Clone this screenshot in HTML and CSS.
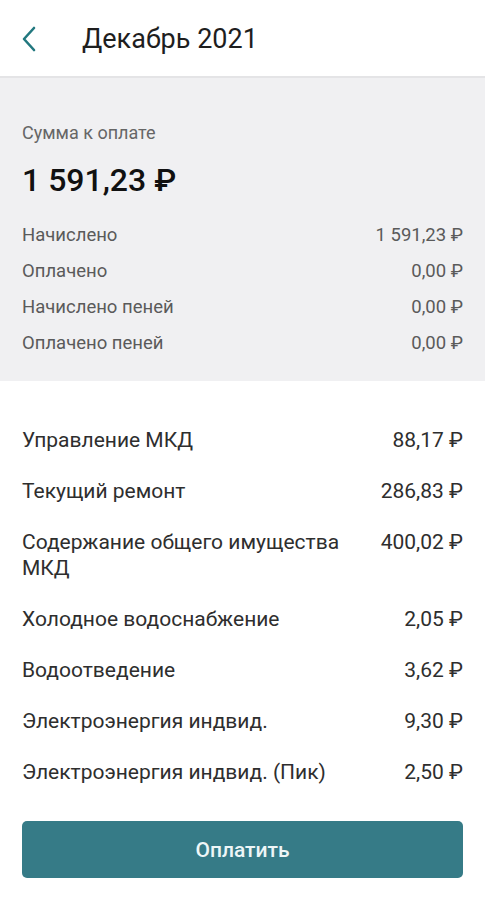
FILE: index.html
```html
<!DOCTYPE html>
<html lang="ru">

<head>
    <meta charset="UTF-8">
    <meta name="viewport" content="width=device-width, initial-scale=1.0">
    <title>Декабрь 2021</title>

    <link rel="stylesheet" href="styles.css">
</head>

<body>
    <div class="header">
        <div class="back">
            <svg width="18" height="26" viewBox="0 0 18 26">
                <path d="M14 2 L4 13 L14 24" fill="none" stroke="#22787f" stroke-width="2.6" stroke-linecap="round" stroke-linejoin="round" />
            </svg>
        </div>
        <div class="title">Декабрь 2021</div>
    </div>

    <div class="summary">
        <div class="summary-label">Сумма к оплате</div>
        <div class="summary-total">1 591,23 ₽</div>
        <div class="summary-rows">
            <div class="srow"><span>Начислено</span><span>1 591,23 ₽</span></div>
            <div class="srow"><span>Оплачено</span><span>0,00 ₽</span></div>
            <div class="srow"><span>Начислено пеней</span><span>0,00 ₽</span></div>
            <div class="srow"><span>Оплачено пеней</span><span>0,00 ₽</span></div>
        </div>
    </div>

    <div class="services">
        <div class="item"><div class="name">Управление МКД</div><div class="sum">88,17 ₽</div></div>
        <div class="item"><div class="name">Текущий ремонт</div><div class="sum">286,83 ₽</div></div>
        <div class="item"><div class="name">Содержание общего имущества МКД</div><div class="sum">400,02 ₽</div></div>
        <div class="item"><div class="name">Холодное водоснабжение</div><div class="sum">2,05 ₽</div></div>
        <div class="item"><div class="name">Водоотведение</div><div class="sum">3,62 ₽</div></div>
        <div class="item"><div class="name">Электроэнергия индвид.</div><div class="sum">9,30 ₽</div></div>
        <div class="item"><div class="name">Электроэнергия индвид. (Пик)</div><div class="sum">2,50 ₽</div></div>
    </div>

    <div class="pay">
        <div class="pay-btn">Оплатить</div>
    </div>
</body>

</html>
```

FILE: styles.css
```css
body {
    margin: 0;
    font-family: Roboto, "Noto Sans", "Liberation Sans", sans-serif;
    background-color: #ffffff;
    color: #222222;
}

.header {
    height: 78px;
    display: flex;
    align-items: center;
    border-bottom: 2px solid #e4e4e6;
    padding-left: 20px;
    padding-top: 2px;
    box-sizing: border-box;
}

.back {
    width: 18px;
    height: 26px;
    display: flex;
    margin-right: 44px;
}

.title {
    font-size: 27px;
    font-weight: 400;
    color: #1e1e1e;
}

.summary {
    background-color: #f0f0f2;
    padding: 45px 22px 28px 22px;
}

.summary-label {
    font-size: 18px;
    line-height: 20px;
    color: #666666;
}

.summary-total {
    font-size: 32px;
    line-height: 34px;
    font-weight: 500;
    color: #111111;
    margin-top: 20px;
}

.summary-rows {
    margin-top: 28px;
    display: flex;
    flex-direction: column;
    gap: 16px;
}

.srow {
    display: flex;
    justify-content: space-between;
    font-size: 18.5px;
    line-height: 20px;
    color: #5a5a5a;
}

.services {
    padding: 46px 22px 0 22px;
    display: flex;
    flex-direction: column;
    gap: 25px;
}

.item {
    display: flex;
    justify-content: space-between;
    gap: 24px;
    font-size: 21px;
    line-height: 26px;
    color: #2e2e2e;
}

.sum {
    white-space: nowrap;
}

.pay {
    padding: 36px 22px 0 22px;
}

.pay-btn {
    height: 57px;
    border-radius: 5px;
    background-color: #367b87;
    color: #eef6f7;
    font-size: 21px;
    font-weight: 500;
    display: flex;
    align-items: center;
    justify-content: center;
}
```
